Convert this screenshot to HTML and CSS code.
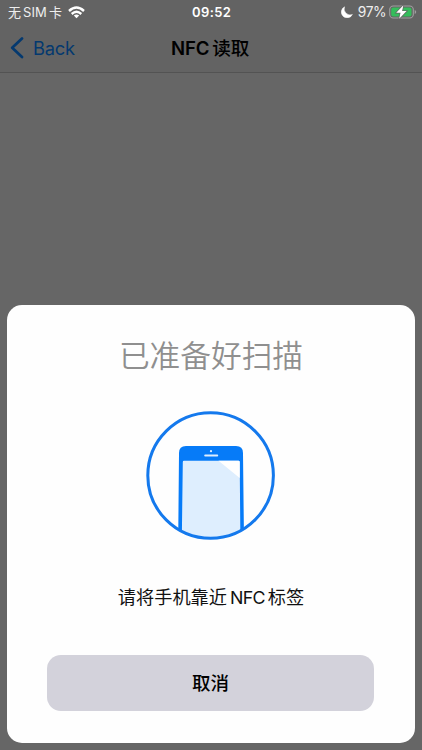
FILE: index.html
```html
<!DOCTYPE html>
<html lang="zh-CN">
<head>
<meta charset="utf-8">
<meta name="viewport" content="width=device-width">
<title>NFC读取</title>
<link rel="stylesheet" href="styles.css">
</head>
<body>
<div class="screen">
  <header class="top">
    <div class="status">
      <div class="carrier">
        <span>无</span><span class="sim">SIM</span><span>卡</span>
        <svg class="wifi" width="17" height="13" viewBox="0 0 17 13" fill="none" stroke="#fff" stroke-width="2.4">
          <path d="M1 5Q8.5-1.8 16 5"/>
          <path d="M3.7 8Q8.5 3.6 13.3 8"/>
          <path d="M8.5 12.3L5.8 9.5Q8.5 7.3 11.2 9.5Z" fill="#fff" stroke="none"/>
        </svg>
      </div>
      <div class="time">09:52</div>
      <div class="power">
        <svg class="moon" width="12" height="12" viewBox="0 0 12 12"><path d="M3.6.8A5.8 5.8 0 1 0 11.4 8.4A5.9 5.9 0 0 1 3.6.8Z" fill="#fff" stroke="#fff" stroke-width=".5"/></svg>
        <span class="percent">97%</span>
        <svg class="battery" width="28" height="14" viewBox="0 0 28 14">
          <rect x=".7" y="1" width="23.6" height="12" rx="3.6" fill="none" stroke="#a0a0a0" stroke-width="1.1"/>
          <rect x="2.2" y="2.5" width="20.3" height="9" rx="2" fill="#34bd5b"/>
          <path d="M25.7 5v4q1.5-.6 1.5-2t-1.5-2Z" fill="#a0a0a0"/>
          <path d="M14.4.3L7.2 7.8h4.3L10.2 13.7L17.6 6.1h-4.5Z" fill="#fff" stroke="#656565" stroke-width="1.4" paint-order="stroke"/>
        </svg>
      </div>
    </div>
    <nav class="nav">
      <div class="back">
        <svg width="14" height="22" viewBox="0 0 14 22"><path d="M12 1.5L2.2 10.8L12 20" fill="none" stroke="#04396f" stroke-width="2.7" stroke-linecap="round" stroke-linejoin="round"/></svg>
        <span>Back</span>
      </div>
      <h1 class="heading"><span class="latin">NFC</span><span class="han">读取</span></h1>
    </nav>
  </header>
  <main class="sheet">
    <h2 class="title">已准备好扫描</h2>
    <svg class="scan" width="130" height="130" viewBox="0 0 130 130">
      <defs><clipPath id="ring"><circle cx="64.6" cy="65.5" r="63"/></clipPath></defs>
      <g clip-path="url(#ring)">
        <path d="M32.2 130L33 43Q33 36 40 36H90Q97 36 97 43L98 130Z" fill="#067bf8"/>
        <path d="M35.8 130L36.8 52Q36.8 50.8 38 50.8H92.5Q93.7 50.8 93.7 52L94.4 130Z" fill="#deeefe"/>
        <path d="M72.5 50.8H92.5Q93.7 50.8 93.7 52V68Z" fill="#fff"/>
        <circle cx="65" cy="41.2" r="1.1" fill="#deeefe"/>
        <rect x="58.2" y="44.5" width="14" height="1.9" rx=".9" fill="#deeefe"/>
      </g>
      <circle cx="64.6" cy="65.5" r="62.8" fill="none" stroke="#1479ed" stroke-width="3"/>
    </svg>
    <p class="message"><span>请将手机靠近</span><span class="latin">NFC</span><span>标签</span></p>
    <button class="cancel">取消</button>
  </main>
</div>
</body>
</html>
```
FILE: styles.css
```css
* { box-sizing: border-box; }
body {
  margin: 0;
  font-family: Inter, "Noto Sans CJK SC", sans-serif;
}
.screen {
  width: 422px;
  height: 750px;
  display: flex;
  flex-direction: column;
  justify-content: space-between;
  padding-bottom: 7px;
  background: #666;
  overflow: hidden;
}
.top {
  height: 73px;
  background: #636363;
  border-bottom: 1px solid #535353;
}
.status {
  height: 24px;
  padding: 0 5px 0 8px;
  display: grid;
  grid-template-columns: 173px 1fr 173px;
  align-items: center;
  color: #fff;
  font-size: 14px;
  line-height: 24px;
}
.carrier, .power { display: flex; align-items: center; }
.carrier { font-size: 13px; color: #eee; }
.sim { margin: 0 2px; letter-spacing: .1px; }
.wifi { margin-left: 6px; }
.time { padding-left: 11px; font-size: 13px; font-weight: 600; letter-spacing: .4px; white-space: nowrap; }
.power { justify-content: flex-end; }
.moon { margin-right: 5px; }
.percent { margin-right: 3px; font-size: 13.8px; letter-spacing: -.5px; color: #eee; }
.nav {
  height: 48px;
  padding-left: 10px;
  display: grid;
  grid-template-columns: 161px auto 1fr;
  align-items: center;
}
.back {
  display: flex;
  align-items: center;
  gap: 9px;
  color: #04396f;
  font-size: 18.3px;
  letter-spacing: -.2px;
}
.heading {
  margin: 0;
  display: flex;
  gap: 3px;
  align-items: baseline;
  font-size: 18.6px;
  line-height: 28px;
  font-weight: 600;
  color: #000;
}
.heading .latin { letter-spacing: -.2px; }
.heading .han { font-weight: 500; }
.sheet {
  width: 408px;
  height: 438px;
  margin-left: 7px;
  display: flex;
  flex-direction: column;
  align-items: center;
  background: #fefefe;
  border-radius: 15px;
}
.title {
  margin: 29px 0 0;
  font-size: 30.7px;
  line-height: 44px;
  font-weight: 350;
  color: #8f8f8f;
}
.scan { margin-top: 32px; }
.message {
  margin: 43px 0 0;
  display: flex;
  align-items: baseline;
  font-size: 18.2px;
  line-height: 28px;
  color: #111;
}
.message .latin { margin: 0 3px 0 3px; font-size: 17.8px; letter-spacing: -.7px; }
.cancel {
  width: 327px;
  height: 56px;
  margin: 43px 1px 0 0;
  padding: 1px 0 0;
  border: 0;
  border-radius: 14px;
  background: #d3d2db;
  color: #000;
  font: 500 18.5px/55px Inter, "Noto Sans CJK SC", sans-serif;
}
```
